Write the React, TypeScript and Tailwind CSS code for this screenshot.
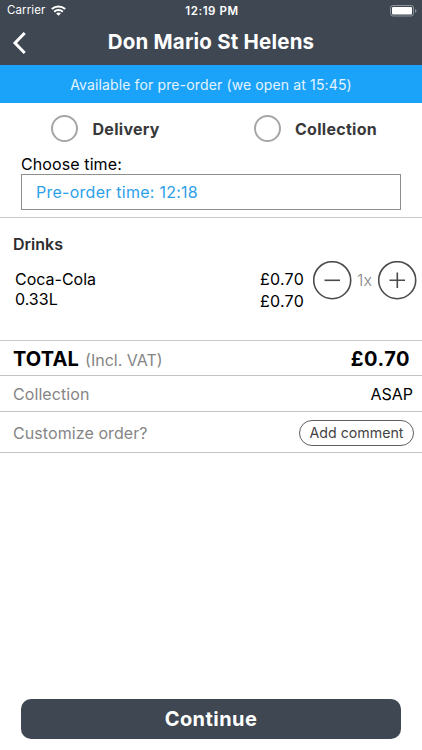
import { useState } from "react"

function StatusBar() {
  return (
    <div className="grid h-[22px] grid-cols-3 items-center pl-[7px] pr-[5px] text-[11.5px] leading-none">
      <div className="flex items-center gap-[6px]">
        <span className="tracking-[0.1px]">Carrier</span>
        <svg className="mb-[2px]" width="15" height="11" viewBox="0 0 15 11" fill="none" stroke="white" strokeWidth="2">
          <path d="M0.8 4.1C4.6 0.5 10.4 0.5 14.2 4.1" />
          <path d="M3.2 6.8C5.6 4.5 9.4 4.5 11.8 6.8" />
          <path d="M7.5 10.8L5.1 8.5C6.5 7.3 8.5 7.3 9.9 8.5Z" fill="white" stroke="none" />
        </svg>
      </div>
      <span className="pt-px text-center font-semibold tracking-[0.55px]">12:19 PM</span>
      <svg className="mb-px justify-self-end" width="27" height="12" viewBox="0 0 27 12">
        <rect x="0.5" y="0.5" width="23" height="10.5" rx="2.5" fill="none" stroke="#8d939b" />
        <rect x="2" y="2" width="20" height="7.5" rx="1" fill="white" />
        <path d="M25 4v4c2-1 2-3 0-4z" fill="#8d939b" />
      </svg>
    </div>
  )
}

function DeliveryOption({ label, checked, onSelect }: { label: string; checked: boolean; onSelect: () => void }) {
  return (
    <button onClick={onSelect} className="flex items-center gap-[14.5px] text-[16px] font-bold text-[#38383a]">
      <span className="flex size-[27px] items-center justify-center rounded-full border-2 border-[#a6a6a6]">
        {checked && <span className="size-[15px] rounded-full bg-[#1ba3f9]"></span>}
      </span>
      <span className="tracking-[0.28px]">{label}</span>
    </button>
  )
}

function App() {
  const [method, setMethod] = useState("")
  const [count, setCount] = useState(1)

  const price = `£${(0.7 * count).toFixed(2)}`

  return (
    <div className="flex h-[750px] w-[422px] flex-col bg-white font-['Inter',sans-serif] text-black">

      {/* Header */}
      <header className="h-[65px] bg-[#3e4752] text-white">
        <StatusBar />
        <div className="grid h-[41px] grid-cols-[40px_1fr_40px] items-center">
          <button className="pl-[12px]" aria-label="Back">
            <svg width="16" height="24" viewBox="0 0 16 24" fill="none" stroke="white" strokeWidth="3">
              <path d="M12.7 2L3 12L12.7 22" />
            </svg>
          </button>
          <h1 className="text-center text-[20.5px] font-bold tracking-[0.2px]">Don Mario St Helens</h1>
        </div>
      </header>

      <div className="flex h-[38px] items-center justify-center bg-[#1ba3f9] text-[14px] tracking-[0.13px] text-[#e4f4ff]">
        Available for pre-order (we open at 15:45)
      </div>

      {/* Delivery method and time */}
      <section className="h-[115px] border-b border-[#c8c8c8] px-[21px]">
        <div className="grid h-[51px] grid-cols-[202.5px_1fr] items-center pl-[30px]">
          <DeliveryOption label="Delivery" checked={method === "delivery"} onSelect={() => setMethod("delivery")} />
          <DeliveryOption label="Collection" checked={method === "collection"} onSelect={() => setMethod("collection")} />
        </div>
        <p className="h-[20px] text-[16px] leading-[20px] tracking-[0.1px]">Choose time:</p>
        <div className="flex h-[36px] items-center border border-[#8e8e8e] pl-[14px] text-[16px] tracking-[0.26px] text-[#2da0e8]">
          Pre-order time: 12:18
        </div>
      </section>

      {/* Order items */}
      <section className="h-[123px] border-b border-[#c8c8c8] pl-[13px] pr-[5px] pt-[16px]">
        <h2 className="text-[16px] font-semibold leading-[20px] text-[#2c2c2e]">Drinks</h2>
        <div className="flex pl-[2px] pt-[6px] text-[16px]">
          <p className="flex-1 pt-[10px] leading-[19.5px]">
            Coca-Cola
            <br />
            0.33L
          </p>
          <p className="mr-[9px] pt-[9px] text-right leading-[21.5px] tracking-[0.25px]">
            £0.70
            <br />
            {price}
          </p>
          <div className="flex h-[40px] items-center">
            <button onClick={() => setCount(Math.max(1, count - 1))} aria-label="Less">
              <svg width="39" height="39" viewBox="0 0 39 39" fill="none" stroke="#4b4b4b" strokeWidth="1.6">
                <circle cx="19.2" cy="19.2" r="18.5" />
                <path d="M11.5 19.3H27" />
              </svg>
            </button>
            <span className="w-[26px] pr-px text-center font-light text-[#858585]">{count}x</span>
            <button onClick={() => setCount(count + 1)} aria-label="More">
              <svg width="39" height="39" viewBox="0 0 39 39" fill="none" stroke="#4b4b4b" strokeWidth="1.6">
                <circle cx="19.2" cy="19.2" r="18.5" />
                <path d="M11.5 19.3H27M19.3 11.5V27" />
              </svg>
            </button>
          </div>
        </div>
      </section>

      {/* Summary */}
      <section className="text-[16px]">
        <div className="flex h-[35px] items-center justify-between border-b border-[#c4c4c4] pl-[13px] pr-[12px] pt-[2px]">
          <p className="flex items-baseline gap-[6px]">
            <span className="text-[20px] font-bold tracking-[0.15px]">TOTAL</span>
            <span className="text-[#858585]">(Incl. VAT)</span>
          </p>
          <span className="text-[20px] font-bold tracking-[0.5px]">{price}</span>
        </div>
        <div className="flex h-[36px] items-center justify-between border-b border-[#c4c4c4] pl-[13px] pr-[9px]">
          <span className="tracking-[0.08px] text-[#858585]">Collection</span>
          <span>ASAP</span>
        </div>
        <div className="flex h-[41px] items-center justify-between border-b border-[#c4c4c4] pl-[13px] pr-[8px] pt-px">
          <span className="tracking-[0.08px] text-[#858585]">Customize order?</span>
          <button className="h-[26px] w-[115px] rounded-full border border-[#606060] text-[14.2px] text-[#444]">
            Add comment
          </button>
        </div>
      </section>

      <button className="mx-[21px] mb-[11px] mt-auto h-[40px] rounded-[10px] bg-[#3e4752] text-[20px] font-bold tracking-[0.45px] text-white">
        Continue
      </button>

    </div>
  )
}

export default App
